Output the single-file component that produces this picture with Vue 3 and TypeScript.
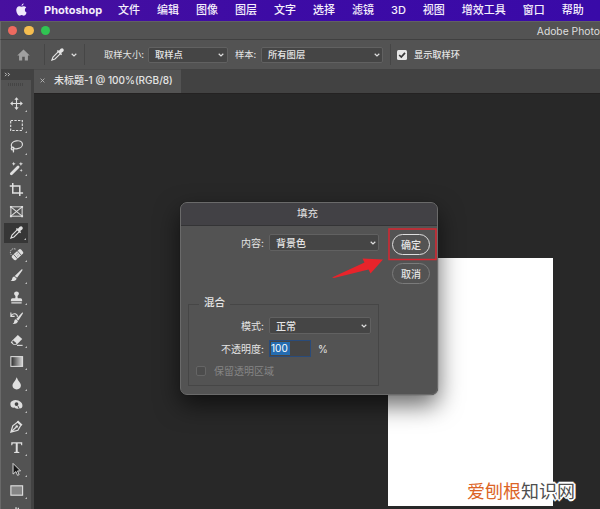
<script setup lang="ts">
import { ref } from 'vue'

interface Tool {
  name: string
  art: string
  single?: boolean
}

const menus: string[] = ['文件', '编辑', '图像', '图层', '文字', '选择', '滤镜', '3D', '视图', '增效工具', '窗口', '帮助']

const eyedropper =
  '<path d="M8.700 5.200 3.200 10.700 2 14l3.300-1.200 5.500-5.500" fill="none" stroke="currentColor" stroke-width="1.200"/><path d="M7.300 4.200 8.400 3.100 9.500 4.100 11.400 1.900Q13.100.8 14.300 2.100 15.300 3.300 14.100 4.700L11.900 6.500 12.900 7.600 11.800 8.700Z" fill="currentColor"/>'

const tools: Tool[] = [
  { name: '移动', art: '<path d="M8 3v10M3 8h10" stroke="currentColor" stroke-width="1.200"/><path d="M8 1.200 10.300 4H5.700zM8 14.800 5.700 12h4.600zM1.200 8 4 5.700v4.600zM14.800 8 12 10.300V5.700z" fill="currentColor"/>' },
  { name: '选框', art: '<rect x="1.800" y="2.700" width="12.400" height="10.600" fill="none" stroke="currentColor" stroke-width="1.200" stroke-dasharray="2.500 1.400"/>' },
  { name: '套索', art: '<g fill="none" stroke="currentColor" stroke-width="1.300"><ellipse cx="8.400" cy="6.200" rx="6" ry="4.200" transform="rotate(-10 8.400 6.200)"/><circle cx="3.900" cy="10.200" r="1.500"/><path d="M4.500 11.300Q5.600 12.500 4.300 14.300"/></g>' },
  { name: '魔棒', art: '<path d="M2.500 13.700 9.700 6.500" stroke="currentColor" stroke-width="3" stroke-linecap="round"/><path d="M5 .8 5.600 2.300 7 3 5.600 3.600 5 5 4.400 3.600 3 3 4.400 2.300zM12.700.8 13.300 2.400 15 3 13.300 3.600 12.700 5.200 12.100 3.600 10.500 3 12.100 2.400zM13 8.300 13.500 9.500 14.700 10 13.500 10.500 13 11.700 12.500 10.500 11.300 10 12.500 9.500z" fill="currentColor"/>' },
  { name: '裁剪', art: '<path d="M.8 4.200h10.700v10.600M4 1v10.700h11" fill="none" stroke="currentColor" stroke-width="1.600"/>' },
  { name: '图框', single: true, art: '<g fill="none" stroke="currentColor" stroke-width="1.100"><rect x="2" y="3" width="12" height="10"/><path d="m2 3 12 10M14 3 2 13"/></g><path d="M1 2h2v2H1zM13 2h2v2h-2zM1 12h2v2H1zM13 12h2v2h-2z" fill="currentColor"/>' },
  { name: '吸管', art: eyedropper },
  { name: '修复画笔', art: '<g transform="rotate(-42 9 8)"><rect x="2.400" y="5.100" width="13" height="6.200" rx="2" fill="currentColor"/><path d="M6 5v6.500M11.500 5v6.500M7.700 7h.8M9.500 7h.8M7.700 9.300h.8M9.500 9.300h.8" stroke="#535353" stroke-width=".8"/></g><path d="M6.900 2.200Q3 1 1.700 4.400 1 7.500 3 8.700" fill="none" stroke="currentColor" stroke-width="1" stroke-dasharray="1.300 1"/>' },
  { name: '画笔', art: '<path d="M13.600 1.300Q15 1 14.200 2.700L8.600 10.500 6.100 8.500zM5.700 9 8.100 11.100Q7.500 14.300 1.700 13.900 3.400 13 3.400 11.100 3.800 9 5.700 9z" fill="currentColor"/>' },
  { name: '图章', art: '<path d="M6.700 8.700 6.900 6.500Q5.300 5.200 5.400 3.800 5.500 1.600 8 1.500q2.500.1 2.600 2.300 0 1.400-1.500 2.700l.2 2.200h3q1.700.2 1.700 2V12H2v-1.300q0-1.800 1.700-2zM2.500 13h11v1.300h-11z" fill="currentColor"/>' },
  { name: '历史画笔', art: '<path d="M14.100 1.600Q15.400 1.300 14.700 2.900L10 10 7.700 8.400zM7.300 8.900l2.300 1.800Q9 14.100 3.900 13.900q1.700-1 1.700-2.900.2-2.100 1.700-2.100z" fill="currentColor"/><path d="M2 5.500Q3.500 2.300 6.700 3q2.600 1 2.200 3.300M2 1.700v4h4" fill="none" stroke="currentColor" stroke-width="1.200"/>' },
  { name: '橡皮擦', art: '<path d="m3.200 8.200 6.200-6 4.700 4.100-6 6.100H4.700L1.900 10z" fill="currentColor"/><path d="m3.300 9.200 1.300-1.300L8 11l-.9.800H5z" fill="#535353"/><path d="M8.500 13.200h6" stroke="currentColor" stroke-width="1.200"/>' },
  { name: '渐变', art: '<defs><linearGradient id="ramp"><stop stop-color="#292929"/><stop offset="1" stop-color="#d8d8d8"/></linearGradient></defs><rect x="2" y="2.800" width="12.500" height="10.400" fill="url(#ramp)" stroke="currentColor" stroke-width="1.100"/>' },
  { name: '模糊', art: '<path d="M8.200 1.400Q9 3.900 11.500 7 12.700 8.700 12.700 10.200 12.400 14.200 8.200 14.400 4 14.200 3.700 10.200 3.700 8.700 5 7 7.500 3.900 8.200 1.400z" fill="currentColor"/>' },
  { name: '海绵', art: '<path d="M2.200 5.100Q5.500 1.900 10 3.800q5 2.300 4.300 6.300-.5 2.500-3.100 2.200-3.500.8-5.300-1Q2 12 1.500 8.200 1.200 6.200 2.200 5.100z" fill="currentColor"/><circle cx="8" cy="7.500" r="2" fill="#454545"/><path d="m9.500 9.500 1.300 3" stroke="#535353"/>' },
  { name: '钢笔', art: '<path d="M2 14 4 7.200 9.200 3.300 12.700 6.500 9.500 12 2 14zM2.300 13.700 7.500 8.800" fill="none" stroke="currentColor" stroke-width="1.300"/><circle cx="8.300" cy="7.900" r="1.300" fill="currentColor"/><path d="m9.700 1.600 4.700 4.600-1.300 1.100-4.700-4.400z" fill="currentColor"/>' },
  { name: '文字', art: '<path d="M2.400 2.400h11.700v3.300h-1L12.500 3.800H9.300v8.600l1.700.5v.9H5.500v-.9l1.700-.5V3.800H4l-.6 1.900h-1z" fill="currentColor"/>' },
  { name: '路径选择', art: '<path d="m4.300 1.500 8 8H9.100l1.700 4-1.700.7-1.700-4-3.100 2.700z" fill="#171717" stroke="currentColor" stroke-width="1"/>' },
  { name: '矩形', art: '<rect x="2" y="3" width="12.500" height="10" fill="#858585" stroke="currentColor" stroke-width="1.200"/>' },
  { name: '抓手', art: '<path d="m4.400 14-2.500-4.400 1-.7L5 11 4.300 4.500l1.300-.3L6.800 8.600V2.500h1.400v5.900L9.400 3h1.300l-.3 6 1.800-3.800 1.100.6L12 14z" fill="currentColor"/>' },
]

const activeTool = ref('吸管')
const opacity = ref(100)
</script>

<template>
  <div class="screen">
    <nav class="menubar">
      <svg class="apple" viewBox="0 0 14 16">
        <path d="M9.700 0Q9.900 2.600 7 3.500 6.900 1 9.700 0zM7.100 4.500Q8.100 4.100 9.400 3.900 11.800 3.800 13 5.600 11.100 6.700 11.200 8.700 11.300 11 13.500 12 12.300 15.600 10 15.800L7.200 15.100 4.500 15.800Q2.400 15.800 1 12-.5 7.800 1.300 5.400 3.200 2.800 6 4.200z" />
      </svg>
      <strong>Photoshop</strong>
      <span v-for="menu in menus" :key="menu">{{ menu }}</span>
    </nav>

    <header class="titlebar">
      <i class="light close"></i><i class="light minimise"></i><i class="light expand"></i>
      <span class="app-title">Adobe Photo</span>
    </header>

    <section class="options">
      <svg class="home" viewBox="0 0 14 13"><path d="M7 .5 13.800 7h-2v5.500H8.400V8.400H5.600v4.100H2.200V7H.2z" /></svg>
      <i class="rule first"></i>
      <svg class="dropper" viewBox="0 0 16 16" v-html="eyedropper"></svg>
      <svg class="chevron loose" viewBox="0 0 6 4"><path d="m.7.8 2.300 2.200L5.300.8" /></svg>
      <i class="rule second"></i>
      <label class="size-label">取样大小:</label>
      <div class="select sample-size">取样点<svg class="chevron" viewBox="0 0 6 4"><path d="m.7.8 2.300 2.200L5.300.8" /></svg></div>
      <label class="sample-label">样本:</label>
      <div class="select sample-source">所有图层<svg class="chevron" viewBox="0 0 6 4"><path d="m.7.8 2.300 2.200L5.300.8" /></svg></div>
      <i class="rule third"></i>
      <svg class="check" viewBox="0 0 10 10"><rect width="10" height="10" rx="1.500" /><path d="M2.200 5 4.300 7.100 8 2.900" /></svg>
      <label>显示取样环</label>
    </section>

    <main class="body">
      <aside class="rail">
        <div class="rail-head">
          <svg viewBox="0 0 8 6"><path d="m1 1 2 2-2 2M4.500 1l2 2-2 2" /></svg>
        </div>
        <div class="tools">
          <i class="grip"></i>
          <button v-for="tool in tools" :key="tool.name" :aria-label="tool.name" class="tool" :class="{ active: tool.name === activeTool }" @click="activeTool = tool.name">
            <svg viewBox="0 0 16 16" v-html="tool.art"></svg>
            <i v-if="!tool.single" class="corner"></i>
          </button>
        </div>
      </aside>
      <section class="document">
        <div class="tabs">
          <div class="tab">
            <svg viewBox="0 0 6 6"><path d="m.7.7 4.600 4.600M5.300.7.7 5.300" /></svg>
            <span>未标题-1 @ 100%(RGB/8)</span>
          </div>
        </div>
        <div class="workspace"></div>
      </section>
    </main>

    <div class="artboard"></div>

    <div class="dialog">
      <div class="dialog-title">填充</div>
      <div class="dialog-body">
        <div class="form">
          <div class="row content-row">
            <label>内容:</label>
            <div class="select content-select">背景色<svg class="chevron" viewBox="0 0 6 4"><path d="m.7.8 2.300 2.200L5.300.8" /></svg></div>
          </div>
          <div class="group">
            <span class="legend">混合</span>
            <div class="row mode-row">
              <label>模式:</label>
              <div class="select mode-select">正常<svg class="chevron" viewBox="0 0 6 4"><path d="m.7.8 2.300 2.200L5.300.8" /></svg></div>
            </div>
            <div class="row opacity-row">
              <label>不透明度:</label>
              <div class="amount"><span>{{ opacity }}</span></div>
              <span class="percent">%</span>
            </div>
            <div class="preserve"><i></i><span>保留透明区域</span></div>
          </div>
        </div>
        <div class="actions">
          <button class="pill primary">确定</button>
          <button class="pill">取消</button>
        </div>
      </div>
    </div>

    <svg class="callout" viewBox="0 0 49 33"><rect x="1" y="1" width="47" height="30.500" /></svg>
    <svg class="arrow" viewBox="0 0 54 24"><path d="M1 20.500 33.500 5.500 31.500 1.500 52 2.500 39.500 16.500 37.500 12.500 3 20.900z" /></svg>

    <div class="watermark"><span>爱刨根</span>知识网</div>
  </div>
</template>

<style>
body {
  margin: 0;
  overflow: hidden;
  background: #282828;
}
</style>

<style scoped>
* {
  box-sizing: border-box;
}
.screen {
  position: relative;
  display: flex;
  flex-direction: column;
  width: 600px;
  height: 509px;
  overflow: hidden;
  background: #282828;
  color: #e4e4e4;
  font: 10px/14px Inter, "Noto Sans CJK SC", sans-serif;
  white-space: nowrap;
}
svg {
  display: block;
  flex: none;
}
button {
  margin: 0;
  padding: 0;
  border: 0;
  background: none;
  color: inherit;
  font: inherit;
}
.menubar {
  display: flex;
  flex: none;
  align-items: center;
  gap: 17px;
  height: 21px;
  padding: 0 0 2px 16px;
  background: linear-gradient(90deg, #48109f, #3d0ba5 45%, #390aa8);
  color: #f5effc;
  font-size: 11px;
  font-weight: 500;
}
.menubar strong {
  width: 57px;
  font-size: 11px;
  font-weight: 700;
}
.apple {
  width: 11px;
  height: 13px;
  fill: #f0e8fc;
}
.titlebar {
  display: flex;
  flex: none;
  align-items: center;
  gap: 7px;
  height: 19px;
  padding-left: 6.500px;
  border-top: 1px solid #626063;
  border-bottom: 1px solid #404040;
  border-left: 1px solid #696969;
  background: #535353;
}
.light {
  flex: none;
  width: 9.600px;
  height: 9.600px;
  border-radius: 50%;
}
.close { background: #ed6a5f; }
.minimise { background: #f5bd4f; }
.expand { background: #30c452; }
.app-title {
  margin-left: 479.500px;
  color: #dedede;
  font-size: 10.300px;
}
.options {
  display: flex;
  flex: none;
  align-items: center;
  height: 29px;
  padding-left: 16px;
  border-left: 1px solid #696969;
  background: #535353;
}
.home {
  width: 13px;
  height: 12px;
  fill: #a0a0a0;
}
.rule {
  width: 1px;
  height: 21px;
  background: #464646;
}
.first { margin-left: 14px; }
.dropper {
  width: 15px;
  height: 15px;
  margin-left: 5px;
}
.chevron {
  width: 6px;
  height: 4px;
  fill: none;
  stroke: #dedede;
  stroke-width: 1.200;
}
.loose { margin-left: 6px; }
.second { margin-left: 7px; }
.size-label {
  width: 40px;
  margin-left: 19px;
  font-size: 9.300px;
}
.select {
  display: flex;
  align-items: center;
  justify-content: space-between;
  border: 1px solid #616161;
  border-radius: 2px;
  background: #454545;
  font-weight: 500;
}
.sample-size {
  width: 80px;
  height: 16px;
  margin-left: 4px;
  padding: 0 3px 0 6px;
  font-size: 9.300px;
}
.sample-label {
  width: 22px;
  margin-left: 7px;
  font-size: 9.300px;
}
.sample-source {
  width: 122px;
  height: 16px;
  margin-left: 4px;
  padding: 0 2px 0 6px;
  font-size: 9.300px;
}
.third { margin-left: 7px; }
.check {
  width: 10px;
  height: 10px;
  margin: 0 7px 0 6px;
  fill: #e7e7e7;
}
.check path {
  fill: none;
  stroke: #383838;
  stroke-width: 1.700;
}
.options > label:last-child {
  font-size: 9.200px;
  font-weight: 500;
}
.body {
  display: flex;
  flex: 1;
  min-height: 0;
}
.rail {
  display: flex;
  flex: none;
  flex-direction: column;
  width: 34px;
  border-right: 3px solid #424242;
  border-left: 1px solid #696969;
}
.rail-head {
  flex: none;
  height: 11px;
  padding: 3px 0 0 3px;
  background: #424242;
}
.rail-head svg {
  width: 7px;
  height: 5px;
  fill: none;
  stroke: #d9d9d9;
}
.tools {
  display: flex;
  flex: 1;
  flex-direction: column;
  align-items: center;
  min-height: 0;
  overflow: hidden;
  background: #535353;
}
.grip {
  flex: none;
  width: 16px;
  height: 3px;
  margin: 3px 0 7px;
  background: repeating-linear-gradient(90deg, #454545 0 1px, #535353 1px 2px);
}
.tool {
  position: relative;
  display: flex;
  flex: none;
  align-items: center;
  justify-content: center;
  width: 26px;
  height: 21.500px;
  color: #dfdfdf;
}
.tool.active {
  border: 1px solid #535353;
  background: #363636;
}
.tool svg {
  width: 15px;
  height: 15px;
}
.corner {
  position: absolute;
  right: 2px;
  bottom: 3px;
  border-bottom: 2.500px solid #bdbdbd;
  border-left: 2.500px solid transparent;
}
.document {
  display: flex;
  flex: 1;
  flex-direction: column;
}
.tabs {
  display: flex;
  height: 25px;
  border-bottom: 1px solid #242222;
  background: #424242;
}
.tab {
  display: flex;
  align-items: center;
  gap: 9px;
  width: 147px;
  padding: 0 0 3px 6px;
  border-top: 1px solid #4b4b4b;
  background: #535353;
  font-size: 10px;
  font-weight: 500;
}
.tab svg {
  width: 5px;
  height: 5px;
  fill: none;
  stroke: #bcbcbc;
}
.workspace {
  flex: 1;
  background: #282828;
}
.artboard {
  position: absolute;
  top: 258px;
  left: 388px;
  width: 165px;
  height: 248px;
  background: #fff;
}
.dialog {
  position: absolute;
  top: 202px;
  left: 180px;
  display: flex;
  flex-direction: column;
  width: 258px;
  height: 193px;
  border: 1px solid #6a6a6a;
  border-radius: 7px;
  background: #535353;
  box-shadow: 0 10px 24px rgba(0, 0, 0, 0.6), 0 0 1px #151515;
  overflow: hidden;
}
.dialog-title {
  display: flex;
  flex: none;
  align-items: center;
  justify-content: center;
  height: 23px;
  padding: 0 3px 1px 0;
  border-bottom: 1px solid #343436;
  background: #424145;
  font-size: 10.500px;
}
.dialog-body {
  display: flex;
  flex: 1;
  padding: 8px 0 0 7px;
}
.form {
  display: flex;
  flex-direction: column;
  width: 191px;
}
.row {
  display: flex;
  align-items: center;
  gap: 5px;
}
.row label {
  width: 76px;
  text-align: right;
}
.content-select {
  width: 110px;
  height: 17px;
  padding: 0 2px 0 6px;
}
.group {
  display: flex;
  flex-direction: column;
  width: 191px;
  height: 82px;
  margin-top: 53px;
  border: 1px solid #464646;
}
.legend {
  align-self: flex-start;
  height: 14px;
  margin: -9px 0 0 10px;
  padding: 0 5px;
  background: #535353;
  font-size: 10.500px;
  font-weight: 500;
}
.group .row label { width: 75px; }
.mode-row { margin-top: 7px; }
.mode-select {
  width: 102px;
  height: 17px;
  padding: 0 3px 0 6px;
}
.opacity-row { margin-top: 6px; }
.amount {
  display: flex;
  align-items: center;
  width: 42px;
  height: 17px;
  padding: 1px;
  border: 1px solid #294b7a;
  background: #454545;
}
.amount span {
  width: 19px;
  line-height: 13px;
  background: #246cb1;
  color: #fff;
}
.percent { margin-left: 2px; }
.preserve {
  display: flex;
  align-items: center;
  gap: 8px;
  margin: 7px 0 0 7px;
  color: #858585;
}
.preserve i {
  width: 10px;
  height: 10px;
  border: 1px solid #656565;
  border-radius: 2px;
  background: #4c4c4c;
}
.actions {
  display: flex;
  flex-direction: column;
  gap: 8px;
  margin-left: 13px;
}
.pill {
  width: 38px;
  height: 21px;
  border: 1px solid #7b7b7b;
  border-radius: 11px;
  color: #e4e4e4;
  font-size: 10px;
  font-weight: 500;
  line-height: 18px;
}
.primary { border-color: #dedede; }
.callout {
  position: absolute;
  top: 228px;
  left: 388px;
  width: 49px;
  height: 33px;
  fill: none;
  stroke: #d92630;
  stroke-width: 1.500;
}
.arrow {
  position: absolute;
  top: 257px;
  left: 331px;
  width: 54px;
  height: 24px;
  fill: #e8242b;
}
.watermark {
  position: absolute;
  top: 478px;
  left: 467px;
  color: #505050;
  font-family: "Noto Sans CJK SC", sans-serif;
  font-size: 18px;
  line-height: 24px;
  text-shadow: -2px 0 #fff, 2px 0 #fff, 0 -2px #fff, 0 2px #fff, -1px -1px #fff, 1px 1px #fff, -1px 1px #fff, 1px -1px #fff;
}
.watermark span { color: #dc6426; }
</style>
